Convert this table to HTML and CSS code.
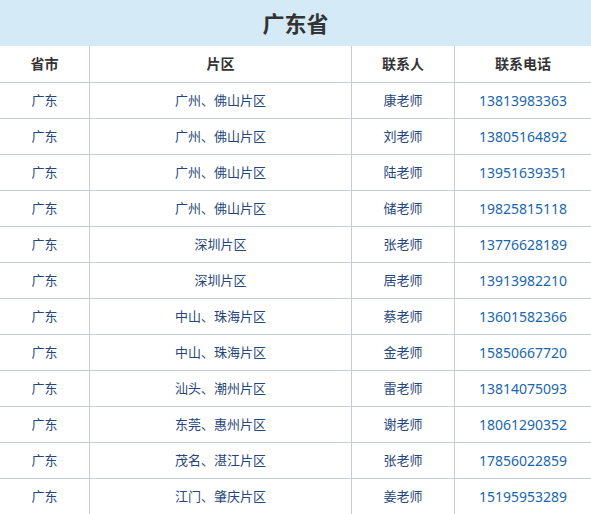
FILE: index.html
```html
<!DOCTYPE html>
<html lang="zh-CN">
<head>
<meta charset="utf-8">
<title>广东省</title>
<link rel="stylesheet" href="styles.css">
</head>
<body>
<div class="province">
  <h2 class="province-title">广东省</h2>
  <table class="contacts">
    <colgroup>
      <col class="c-city">
      <col class="c-area">
      <col class="c-person">
      <col class="c-phone">
    </colgroup>
    <thead>
      <tr><th>省市</th><th>片区</th><th>联系人</th><th class="last">联系电话</th></tr>
    </thead>
    <tbody>
      <tr><td>广东</td><td>广州、佛山片区</td><td>康老师</td><td class="phone last">13813983363</td></tr>
      <tr><td>广东</td><td>广州、佛山片区</td><td>刘老师</td><td class="phone last">13805164892</td></tr>
      <tr><td>广东</td><td>广州、佛山片区</td><td>陆老师</td><td class="phone last">13951639351</td></tr>
      <tr><td>广东</td><td>广州、佛山片区</td><td>储老师</td><td class="phone last">19825815118</td></tr>
      <tr><td>广东</td><td>深圳片区</td><td>张老师</td><td class="phone last">13776628189</td></tr>
      <tr><td>广东</td><td>深圳片区</td><td>居老师</td><td class="phone last">13913982210</td></tr>
      <tr><td>广东</td><td>中山、珠海片区</td><td>蔡老师</td><td class="phone last">13601582366</td></tr>
      <tr><td>广东</td><td>中山、珠海片区</td><td>金老师</td><td class="phone last">15850667720</td></tr>
      <tr><td>广东</td><td>汕头、潮州片区</td><td>雷老师</td><td class="phone last">13814075093</td></tr>
      <tr><td>广东</td><td>东莞、惠州片区</td><td>谢老师</td><td class="phone last">18061290352</td></tr>
      <tr><td>广东</td><td>茂名、湛江片区</td><td>张老师</td><td class="phone last">17856022859</td></tr>
      <tr><td>广东</td><td>江门、肇庆片区</td><td>姜老师</td><td class="phone last">15195953289</td></tr>
    </tbody>
  </table>
</div>
</body>
</html>
```

FILE: styles.css
```css
html, body {
  margin: 0;
  padding: 0;
  background: #ffffff;
}

body {
  font-family: "Noto Sans", "Noto Sans CJK SC", sans-serif;
  font-size: 14px;
}

.province {
  width: 591px;
}

.province-title {
  margin: 0;
  height: 46px;
  line-height: 46px;
  background: #d4ebf7;
  color: #333333;
  font-size: 22px;
  font-weight: bold;
  text-align: center;
}

.contacts {
  width: 591px;
  border-collapse: separate;
  border-spacing: 0;
  table-layout: fixed;
}

.c-city { width: 90px; }
.c-area { width: 262px; }
.c-person { width: 103px; }
.c-phone { width: 136px; }

.contacts th,
.contacts td {
  padding: 0;
  text-align: center;
  border-right: 1px solid #c6ccdc;
  border-bottom: 1px solid #c6ccdc;
  white-space: nowrap;
}

.contacts th.last,
.contacts td.last {
  border-right: none;
}

.contacts th {
  height: 36px;
  line-height: 36px;
  font-weight: bold;
  color: #333333;
}

.contacts td {
  height: 35px;
  line-height: 35px;
  font-size: 13px;
  color: #26467a;
}

.contacts td.phone {
  font-size: 14px;
  color: #1966b0;
}
```
